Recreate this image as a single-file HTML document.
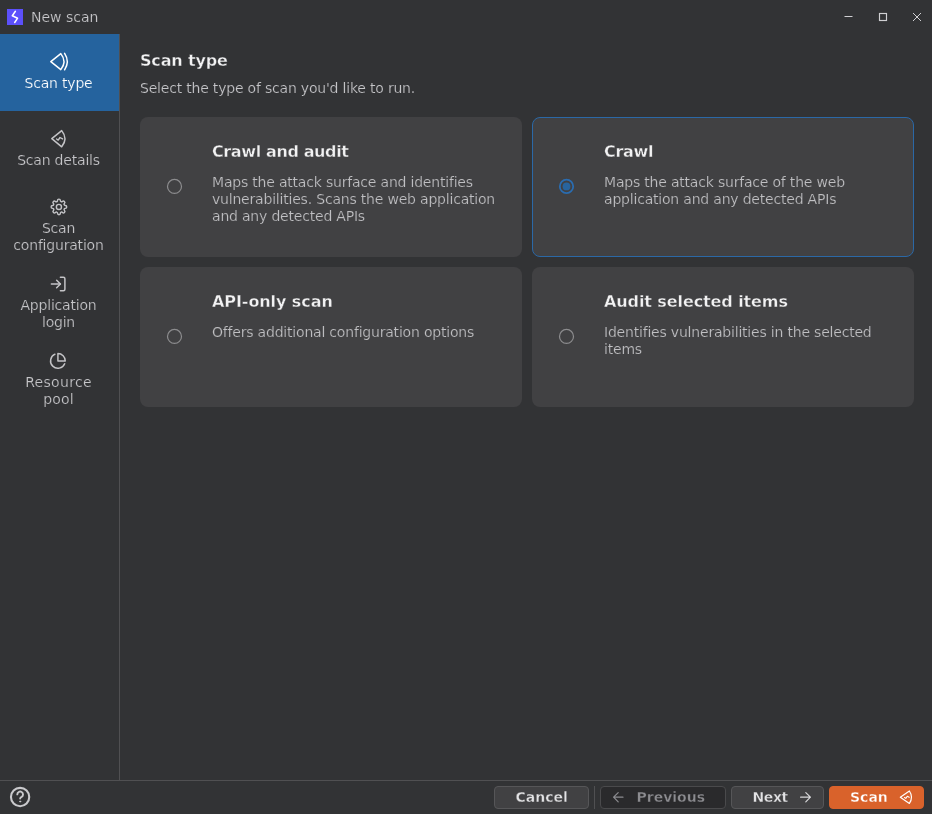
<!DOCTYPE html>
<html lang="en">
<head>
<meta charset="utf-8">
<title>New scan</title>
<style>
*{box-sizing:border-box;margin:0;padding:0}
html,body{width:932px;height:814px;overflow:hidden;background:#323335}
#root{position:absolute;left:0;top:0;width:932px;height:814px;will-change:transform}
body{font-family:"DejaVu Sans","Liberation Sans",sans-serif;color:#d4d4d6;position:relative;font-size:14px}
.abs{position:absolute}
#titlebar{left:0;top:0;width:932px;height:34px}
#appicon{left:7px;top:9px;width:16px;height:16px;background:#5c50fb}
#title{-webkit-text-stroke:0.2px #323335;left:31px;top:8px;font-size:14px;line-height:18px;color:#c9c9cc;white-space:nowrap}
.wc{top:9px;width:16px;height:16px}
#sidebar{left:0;top:34px;width:120px;height:746px;border-right:1px solid #505052}
.nav{-webkit-text-stroke:0.2px #323335;left:0;width:117px;text-align:center;letter-spacing:-0.2px;font-size:14px;line-height:17px;color:#c6c6c9}
.nav svg{display:block;margin:0 auto}
.nav.sel{background:#25639e;color:#fff}
h1{left:140px;top:51px;font-size:16px;line-height:20px;font-weight:bold;-webkit-text-stroke:0.35px #323335;letter-spacing:-0.15px;color:#f2f2f3;white-space:nowrap}
#sub{-webkit-text-stroke:0.2px #323335;left:140px;top:79px;letter-spacing:-0.2px;font-size:14px;line-height:18px;color:#c6c6c9;white-space:nowrap}
.card{width:382px;height:140px;background:#414143;border-radius:8px}
.card.sel{border:1px solid #2b68a6}
.card h2{position:absolute;left:72px;top:25px;font-size:16px;line-height:20px;font-weight:bold;-webkit-text-stroke:0.35px #414143;letter-spacing:-0.15px;color:#f2f2f3;white-space:nowrap}
.card p{-webkit-text-stroke:0.2px #414143;position:absolute;left:72px;top:57px;width:300px;letter-spacing:-0.2px;font-size:14px;line-height:17px;color:#c0c0c3}
.radio{position:absolute;left:26px;top:61px;width:17px;height:17px}
#footer{left:0;top:780px;width:932px;height:34px;border-top:1px solid #505052}
.btn{top:786px;height:23px;border:1px solid #565658;border-radius:4px;background:#414143;color:#e3e3e5;font-size:14px;font-weight:bold;line-height:21px;white-space:nowrap;-webkit-text-stroke:0.35px #414143}
.btn span{top:0}
.btn.dis{background:#2a2a2c;border-color:#4a4a4c;color:#8c8c90;-webkit-text-stroke-color:#2a2a2c}
.btn.pri{background:#d9622b;border-color:#d9622b;color:#fff;-webkit-text-stroke-color:#d9622b}
</style>
</head>
<body><div id="root">
<div id="titlebar" class="abs">
  <div id="appicon" class="abs"><svg width="16" height="16" viewBox="0 0 16 16"><path d="M8.4 2.3 L5.3 6.8 L10.6 9.2 L7.7 13.5" fill="none" stroke="#fff" stroke-width="1.5" stroke-linecap="round" stroke-linejoin="round"/></svg></div>
  <div id="title" class="abs">New scan</div>
  <svg class="abs" style="left:836px;top:0" width="96" height="34" viewBox="836 0 96 34" fill="none" stroke="#d0d0d3" stroke-width="1"><path d="M844.5 16.5H852.5"/><rect x="879.5" y="13.5" width="7" height="7" stroke-width="1.15"/><path d="M913 13L921 21M921 13L913 21"/></svg>
</div>

<div id="sidebar" class="abs"></div>
<div class="abs" style="left:0;top:34px;width:119px;height:77px;background:#25639e"></div>
<svg class="abs" style="left:0;top:34px" width="119" height="400" viewBox="0 34 119 400" fill="none" stroke="#c4c4c7" stroke-width="1.4" stroke-linejoin="round" stroke-linecap="round">
  <g stroke="#fff" stroke-width="1.5"><path d="M60.8 53.6 L50.8 61.6 L60.8 69.6 Q67.2 61.6 60.8 53.6Z"/><path d="M64.6 53.4 Q70 61.6 64.6 69.8"/></g>
  <path d="M61.7 130.6 L51.8 138.6 L61.7 146.8 Q68.2 138.6 61.7 130.6Z" stroke-width="1.5"/><path d="M56.6 139 L58.2 140.1 L60 137.5 L62.6 138.9" stroke-width="1.4"/>
  <g transform="translate(50.4 198.4) scale(0.71)" stroke-width="2"><circle cx="12" cy="12" r="3.6"/><path d="M19.4 15a1.65 1.65 0 0 0 .33 1.82l.06.06a2 2 0 0 1-2.83 2.83l-.06-.06a1.65 1.65 0 0 0-1.82-.33 1.65 1.65 0 0 0-1 1.51V21a2 2 0 0 1-4 0v-.09A1.65 1.65 0 0 0 9 19.4a1.65 1.65 0 0 0-1.82.33l-.06.06a2 2 0 0 1-2.83-2.83l.06-.06a1.65 1.65 0 0 0 .33-1.82 1.65 1.65 0 0 0-1.51-1H3a2 2 0 0 1 0-4h.09A1.65 1.65 0 0 0 4.6 9a1.65 1.65 0 0 0-.33-1.82l-.06-.06a2 2 0 0 1 2.83-2.83l.06.06a1.65 1.65 0 0 0 1.82.33H9a1.65 1.65 0 0 0 1-1.51V3a2 2 0 0 1 4 0v.09a1.65 1.65 0 0 0 1 1.51 1.65 1.65 0 0 0 1.82-.33l.06-.06a2 2 0 0 1 2.83 2.83l-.06.06a1.65 1.65 0 0 0-.33 1.82V9a1.65 1.65 0 0 0 1.51 1H21a2 2 0 0 1 0 4h-.09a1.65 1.65 0 0 0-1.51 1z"/></g>
  <g transform="translate(49.15 274.95) scale(0.75)" stroke-width="2"><path d="M15 3h4a2 2 0 0 1 2 2v14a2 2 0 0 1-2 2h-4"/><path d="M10 17l5-5-5-5"/><path d="M15 12H3"/></g>
  <g transform="translate(49.1 352.1) scale(0.735)" stroke-width="2"><path d="M21.21 15.89A10 10 0 1 1 8 2.83"/><path d="M22 12A10 10 0 0 0 12 2v10z"/></g>
</svg>
<div class="abs nav" style="top:75px;color:#fff;-webkit-text-stroke-color:#25639e">Scan type</div>
<div class="abs nav" style="top:152px">Scan details</div>
<div class="abs nav" style="top:220px">Scan<br>configuration</div>
<div class="abs nav" style="top:297px">Application<br>login</div>
<div class="abs nav" style="top:374px"><span style="letter-spacing:0.3px">Resource</span><br><span style="letter-spacing:0.2px">pool</span></div>

<h1 class="abs">Scan type</h1>
<div id="sub" class="abs">Select the type of scan you'd like to run.</div>

<div class="abs card" style="left:140px;top:117px"><svg class="radio" viewBox="0 0 17 17"><circle cx="8.5" cy="8.45" r="7" fill="none" stroke="#8c8c8e" stroke-width="1.2"/></svg><h2 style="letter-spacing:-0.38px">Crawl and audit</h2><p>Maps the attack surface and identifies vulnerabilities. Scans the web application and any detected APIs</p></div>
<div class="abs card sel" style="left:532px;top:117px"><svg class="radio" style="left:25px;top:60px" viewBox="0 0 17 17"><circle cx="8.5" cy="8.4" r="6.7" fill="none" stroke="#2a6cb0" stroke-width="1.8"/><circle cx="8.5" cy="8.4" r="3.9" fill="#28649e"/></svg><h2 style="left:71px;top:24px;letter-spacing:-0.3px">Crawl</h2><p style="left:71px;top:56px">Maps the attack surface of the web application and any detected APIs</p></div>
<div class="abs card" style="left:140px;top:267px"><svg class="radio" viewBox="0 0 17 17"><circle cx="8.5" cy="8.45" r="7" fill="none" stroke="#8c8c8e" stroke-width="1.2"/></svg><h2 style="letter-spacing:-0.08px">API-only scan</h2><p>Offers additional configuration options</p></div>
<div class="abs card" style="left:532px;top:267px"><svg class="radio" viewBox="0 0 17 17"><circle cx="8.5" cy="8.45" r="7" fill="none" stroke="#8c8c8e" stroke-width="1.2"/></svg><h2 style="letter-spacing:-0.1px">Audit selected items</h2><p>Identifies vulnerabilities in the selected items</p></div>

<div id="footer" class="abs"></div>
<svg class="abs" style="left:9px;top:786px" width="22" height="22" viewBox="0 0 22 22" fill="none" stroke="#c9c9cc" stroke-width="1.9" stroke-linecap="round"><circle cx="11.1" cy="11.05" r="9.15" stroke-width="2.1"/><path d="M8.3 8.4a2.85 2.85 0 1 1 4.3 2.5c-.9.5-1.45.9-1.45 1.7"/><circle cx="11.15" cy="15.5" r=".55" fill="#c9c9cc" stroke-width="1"/></svg>
<div class="abs btn" style="left:494px;width:95px"><span class="abs" style="left:20.5px">Cancel</span></div>
<div class="abs" style="left:594px;top:786px;width:1px;height:23px;background:#505052"></div>
<div class="abs btn dis" style="left:600px;width:126px"><span class="abs" style="left:35.5px">Previous</span></div>
<div class="abs btn" style="left:731px;width:93px"><span class="abs" style="left:20.5px;letter-spacing:-0.4px">Next</span></div>
<div class="abs btn pri" style="left:829px;width:95px"><span class="abs" style="left:20px">Scan</span></div>
<svg class="abs" style="left:600px;top:786px" width="332" height="23" viewBox="600 786 332 23" fill="none" stroke-width="1.2" stroke-linecap="round" stroke-linejoin="round">
  <path d="M623 797.2H613.6M618.2 792.6L613.6 797.2L618.2 801.8" stroke="#8c8c90"/>
  <path d="M800.6 797.2H810.4M805.8 792.6L810.4 797.2L805.8 801.8" stroke="#d8d8da"/>
  <g stroke="#fff"><path d="M909.4 791 L900.3 797.2 L909.4 803.4 Q913.6 797.2 909.4 791Z"/><path d="M904.5 797.5 L905.8 798.4 L907.3 796.3 L909.2 797.3" stroke-width="1.1"/></g>
</svg>
</div></body>
</html>
